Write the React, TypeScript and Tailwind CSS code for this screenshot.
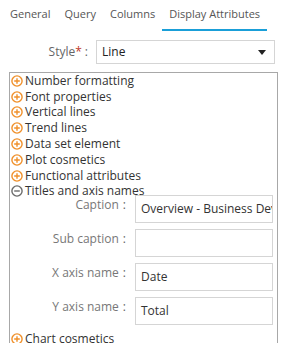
import React from "react";

const Plus = () => (
  <svg width="12" height="12" viewBox="0 0 12 12" className="shrink-0">
    <circle cx="6" cy="6" r="5.1" fill="none" stroke="#f0902a" strokeWidth="1.4" />
    <path d="M3.2 6h5.6M6 3.2v5.6" stroke="#f0902a" strokeWidth="1.4" />
  </svg>
);
const Minus = () => (
  <svg width="12" height="12" viewBox="0 0 12 12" className="shrink-0">
    <circle cx="6" cy="6" r="5.1" fill="none" stroke="#6b6b6b" strokeWidth="1.4" />
    <path d="M3.2 6h5.6" stroke="#6b6b6b" strokeWidth="1.4" />
  </svg>
);

const Item = ({ label, open }: { label: string; open?: boolean }) => (
  <div className="flex items-center gap-[2px] h-[15.8px] text-[12px] text-[#333] leading-none">
    {open ? <Minus /> : <Plus />}
    <span>{label}</span>
  </div>
);

const Field = ({ label, value }: { label: string; value: string }) => (
  <div className="flex items-start h-[34px]">
    <div className="w-[116px] text-right pr-[1px] pt-[4px] text-[12px] text-[#777] leading-none whitespace-nowrap">
      {label}
      <span className="ml-[4px] text-[#666]">:</span>
    </div>
    <div className="ml-[8px] w-[138px] h-[28px] border border-[#d5d5d5] bg-white flex items-center pl-[5px] text-[12px] text-[#333] overflow-hidden whitespace-nowrap">
      {value}
    </div>
  </div>
);

export default function App() {
  const items = [
    "Number formatting",
    "Font properties",
    "Vertical lines",
    "Trend lines",
    "Data set element",
    "Plot cosmetics",
    "Functional attributes",
  ];
  return (
    <div className="w-[302px] h-[343px] bg-white overflow-hidden" style={{ fontFamily: '"Open Sans", sans-serif' }}>
      <div className="flex h-[31px] pl-[3px] text-[11px] text-[#555]">
        <div className="px-[7px] pt-[6px]">General</div>
        <div className="px-[7px] pt-[6px]">Query</div>
        <div className="px-[7px] pt-[6px]">Columns</div>
        <div className="px-[7px] pt-[6px] border-b-2 border-[#1a9fd8]">Display Attributes</div>
      </div>
      <div className="flex items-center mt-[9px] h-[24px]">
        <div className="w-[88px] text-right text-[12px] text-[#666] whitespace-nowrap">
          Style<span className="text-[#c0392b]">*</span>
          <span className="ml-[3px]">:</span>
        </div>
        <div className="ml-[8px] w-[179px] h-[24px] border border-[#d5d5d5] flex items-center justify-between pl-[5px] pr-[8px] text-[12px] text-[#222]">
          <span>Line</span>
          <svg width="8" height="5" viewBox="0 0 8 5">
            <path d="M0 0h8L4 5z" fill="#222" />
          </svg>
        </div>
      </div>
      <div className="ml-[9px] mt-[8px] w-[269px] h-[300px] border-l border-t border-r border-[#a8a8a8] pl-[1px]">
        {items.map((t) => (
          <Item key={t} label={t} />
        ))}
        <Item label="Titles and axis names" open />
        <div className="mt-[-4px]">
          <Field label="Caption" value="Overview - Business Dev" />
          <Field label="Sub caption" value="" />
          <Field label="X axis name" value="Date" />
          <Field label="Y axis name" value="Total" />
        </div>
        <Item label="Chart cosmetics" />
      </div>
    </div>
  );
}
